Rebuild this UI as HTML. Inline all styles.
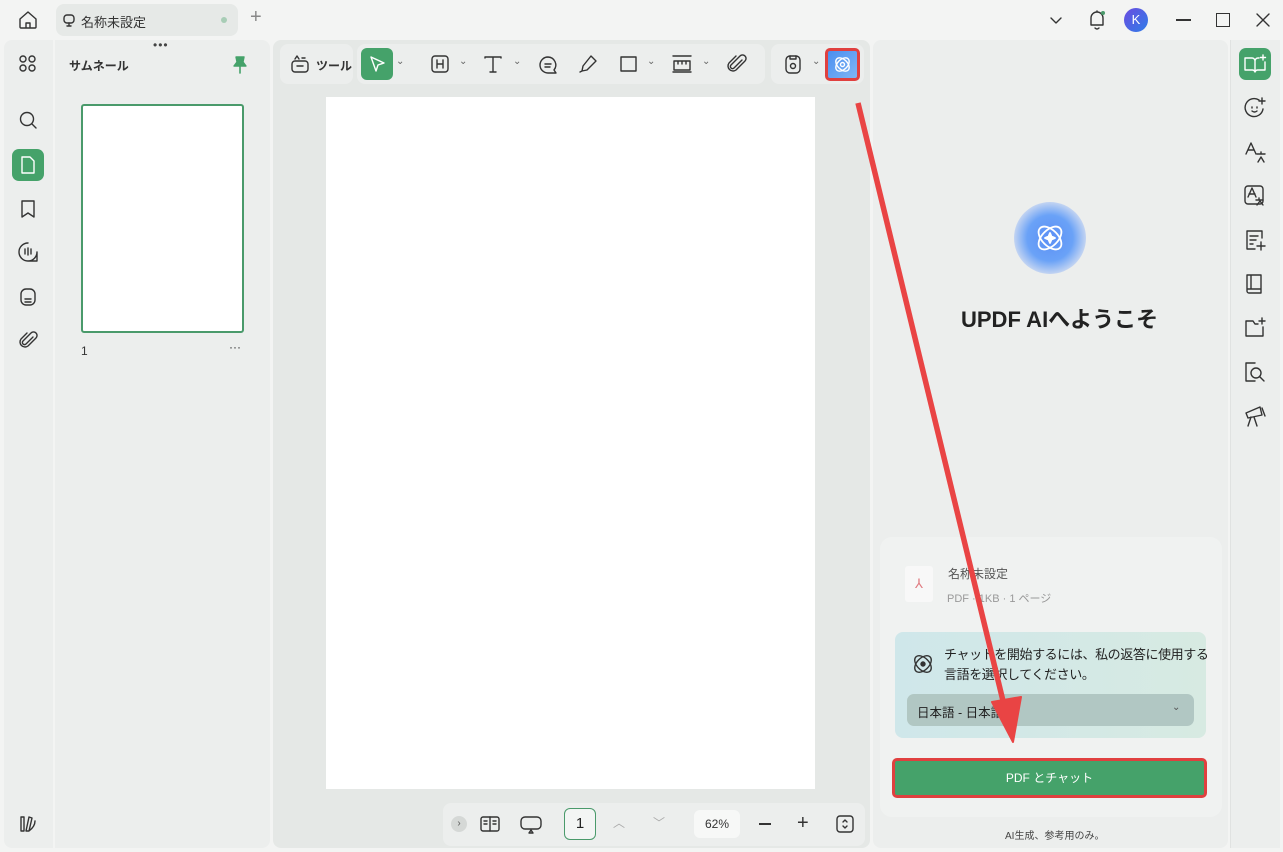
<!DOCTYPE html><html><head><meta charset="utf-8"><style>
*{margin:0;padding:0;box-sizing:border-box}
body{width:1283px;height:852px;background:#f3f4f3;font-family:"Liberation Sans","Noto Sans CJK JP",sans-serif;position:relative;overflow:hidden;color:#222}
.a{position:absolute}
svg{position:absolute;fill:none;stroke:#333;stroke-width:1.4;stroke-linecap:round;stroke-linejoin:round}
.grp{position:absolute;background:#eceeed;border-radius:8px;top:44px;height:40px}
</style></head><body>
<svg style="left:17px;top:9px" width="22" height="22" viewBox="0 0 22 22"><path d="M3 10L11 3l8 7v8a1 1 0 01-1 1H4a1 1 0 01-1-1z M9 19v-5h4v5"/></svg>
<div class="a" style="left:56px;top:4px;width:182px;height:32px;background:#e6e9e7;border-radius:8px"></div>
<svg style="left:62px;top:13px" width="14" height="14" viewBox="0 0 14 14"><rect x="2" y="2" width="10" height="8" rx="3"/><path d="M7 10v3M5 13h4"/></svg>
<div class="a" style="left:81px;top:12px;font-size:13px;color:#333">名称未設定</div>
<div class="a" style="left:221px;top:17px;width:6px;height:6px;border-radius:50%;background:#a8cdb6"></div>
<div class="a" style="left:250px;top:6px;font-size:20px;color:#888;font-weight:300">+</div>
<svg style="left:1049px;top:13px" width="14" height="14" viewBox="0 0 14 14"><path d="M2 5l5 5 5-5"/></svg>
<svg style="left:1086px;top:8px" width="22" height="24" viewBox="0 0 22 24"><path d="M5 17V10a6 6 0 0112 0v7H5z M9 20q2 2 4 0 M11 4V3"/><circle cx="17" cy="5" r="2" fill="#4a9a6b" stroke="none"/></svg>
<div class="a" style="left:1124px;top:8px;width:24px;height:24px;border-radius:50%;background:linear-gradient(135deg,#6a4ce0,#2f7de8);color:#fff;font-size:13px;text-align:center;line-height:24px">K</div>
<div class="a" style="left:1176px;top:19px;width:15px;height:1.5px;background:#333"></div>
<div class="a" style="left:1216px;top:13px;width:14px;height:14px;border:1.5px solid #333"></div>
<svg style="left:1255px;top:12px" width="16" height="16" viewBox="0 0 16 16"><path d="M2 2l12 12M14 2L2 14"/></svg>

<div class="a" style="left:4px;top:40px;width:49px;height:808px;background:#eceeed;border-radius:8px 0 0 8px"></div>
<svg style="left:18px;top:54px" width="20" height="20" viewBox="0 0 20 20"><circle cx="5" cy="5" r="3"/><circle cx="14" cy="5" r="3"/><circle cx="5" cy="14" r="3"/><circle cx="14" cy="14" r="3"/></svg>
<svg style="left:18px;top:110px" width="20" height="20" viewBox="0 0 20 20"><circle cx="9" cy="9" r="6.5"/><path d="M14 14l4 4"/></svg>
<div class="a" style="left:12px;top:149px;width:32px;height:32px;border-radius:7px;background:#45a26a"></div>
<svg style="left:19px;top:155px;stroke:#fff" width="18" height="20" viewBox="0 0 18 20"><path d="M3 2h8l4 4v12H3z"/></svg>
<svg style="left:19px;top:199px" width="18" height="20" viewBox="0 0 18 20"><path d="M3 2h12v16l-6-4-6 4z"/></svg>
<svg style="left:17px;top:241px" width="22" height="22" viewBox="0 0 22 22"><path d="M11 2a9 9 0 109 9 M8 8v5M11 7v7M14 8v5 M20 11v9h-7"/></svg>
<svg style="left:18px;top:286px" width="20" height="22" viewBox="0 0 20 22"><rect x="3" y="3" width="14" height="16" rx="5"/><path d="M7 13h6M7 16h6"/></svg>
<svg style="left:18px;top:330px" width="20" height="22" viewBox="0 0 20 22"><path d="M15 7l-7 7a2 2 0 01-3-3l8-8a3.5 3.5 0 015 5l-8 8a5 5 0 01-7-7l6-6"/></svg>
<svg style="left:18px;top:814px" width="20" height="20" viewBox="0 0 20 20"><path d="M3 17V3h3v14z M8 17l3-14 3 1-3 13z M11 17c4-3 6-6 6-10"/></svg>

<div class="a" style="left:55px;top:40px;width:215px;height:808px;background:#eceeed;border-radius:0 8px 8px 0"></div>
<div class="a" style="left:153px;top:38px;font-size:12px;color:#444;letter-spacing:1px">•••</div>
<div class="a" style="left:69px;top:57px;font-size:12px;font-weight:bold;color:#333">サムネール</div>
<svg style="left:231px;top:55px;fill:#45a26a;stroke:#45a26a" width="18" height="20" viewBox="0 0 18 20"><path d="M5 2h8l-1 5 3 4H3l3-4z"/><path d="M9 11v7" stroke-width="1.6"/></svg>
<div class="a" style="left:81px;top:104px;width:163px;height:229px;background:#fff;border:2px solid #4a9a6b;border-radius:3px"></div>
<div class="a" style="left:81px;top:344px;font-size:12px;color:#333">1</div>
<div class="a" style="left:229px;top:340px;font-size:12px;color:#333">···</div>

<div class="a" style="left:273px;top:40px;width:597px;height:808px;background:#e5e8e6;border-radius:8px"></div>
<div class="grp" style="left:280px;width:73px"></div>
<svg style="left:289px;top:53px" width="22" height="22" viewBox="0 0 22 22"><rect x="3" y="8" width="16" height="11" rx="3"/><path d="M8 13h6 M6 6l2-3 2 3 M13 5h3"/></svg>
<div class="a" style="left:316px;top:57px;font-size:12px;font-weight:bold;color:#333">ツール</div>
<div class="grp" style="left:357px;width:408px"></div>
<div class="a" style="left:361px;top:48px;width:32px;height:32px;background:#45a26a;border-radius:6px"></div>
<svg style="left:367px;top:54px;stroke:#fff" width="20" height="20" viewBox="0 0 20 20"><path d="M4 3l13 6-6 2-2 6z"/></svg>
<div class="a" style="left:396px;top:56px;font-size:10px;color:#666">⌄</div>
<svg style="left:430px;top:54px" width="20" height="20" viewBox="0 0 20 20"><rect x="2" y="2" width="16" height="16" rx="3"/><path d="M7 6v8M13 6v8M7 10h6"/></svg>
<div class="a" style="left:459px;top:56px;font-size:10px;color:#666">⌄</div>
<svg style="left:483px;top:54px" width="20" height="20" viewBox="0 0 20 20"><path d="M2 4V3h16v1 M10 3v15 M7 18h6"/></svg>
<div class="a" style="left:513px;top:56px;font-size:10px;color:#666">⌄</div>
<svg style="left:537px;top:54px" width="22" height="22" viewBox="0 0 22 22"><path d="M11 3a8 8 0 100 16h8l-2-3a8 8 0 00-6-13z M8 10h6M8 13h5"/></svg>
<svg style="left:578px;top:54px" width="20" height="20" viewBox="0 0 20 20"><path d="M13 2l5 5-9 9-5 1 1-5z M4 17l-2 1"/></svg>
<svg style="left:619px;top:54px" width="20" height="20" viewBox="0 0 20 20"><rect x="2" y="3" width="15" height="14"/></svg>
<div class="a" style="left:647px;top:56px;font-size:10px;color:#666">⌄</div>
<svg style="left:671px;top:54px" width="22" height="20" viewBox="0 0 22 20"><path d="M2 2h18M2 18h18 M3 7h16v9H3z M7 7v3M11 7v3M15 7v3"/></svg>
<div class="a" style="left:702px;top:56px;font-size:10px;color:#666">⌄</div>
<svg style="left:726px;top:53px" width="22" height="22" viewBox="0 0 22 22"><path d="M16 7l-8 8a2 2 0 01-3-3l9-9a3.5 3.5 0 015 5l-9 9a5 5 0 01-7-7l7-7"/></svg>
<div class="grp" style="left:771px;width:93px"></div>
<svg style="left:782px;top:53px" width="22" height="22" viewBox="0 0 22 22"><rect x="4" y="3" width="14" height="17" rx="4"/><circle cx="11" cy="13" r="2.5"/><path d="M8 3v3h6V3"/></svg>
<div class="a" style="left:812px;top:56px;font-size:10px;color:#666">⌄</div>
<div class="a" style="left:825px;top:48px;width:35px;height:33px;border:3px solid #e0403f;border-radius:5px;background:linear-gradient(135deg,#4a8ef0,#7fb6f5)"></div>
<svg style="left:831px;top:53px;stroke:#fff" width="23" height="23" viewBox="0 0 23 23"><ellipse cx="11.5" cy="11.5" rx="8" ry="5" transform="rotate(45 11.5 11.5)"/><ellipse cx="11.5" cy="11.5" rx="8" ry="5" transform="rotate(-45 11.5 11.5)"/><circle cx="11.5" cy="11.5" r="2"/></svg>
<div class="a" style="left:326px;top:97px;width:489px;height:692px;background:#fff"></div>
<div class="a" style="left:443px;top:803px;width:422px;height:43px;background:#eceeed;border-radius:8px"></div>
<div class="a" style="left:451px;top:816px;width:16px;height:16px;border-radius:50%;background:#d5d8d6;font-size:10px;text-align:center;line-height:16px;color:#555">›</div>
<svg style="left:480px;top:815px" width="20" height="18" viewBox="0 0 20 18"><rect x="1" y="2" width="18" height="14" rx="2"/><path d="M10 2v14M4 6h3M4 9h3M13 6h3M13 9h3"/></svg>
<svg style="left:520px;top:815px" width="22" height="20" viewBox="0 0 22 20"><rect x="1" y="2" width="20" height="12" rx="4"/><path d="M9 18l2-3 2 3z"/></svg>
<div class="a" style="left:564px;top:808px;width:32px;height:32px;border:1.5px solid #4a9a6b;border-radius:6px;background:#f3f5f4;font-size:15px;text-align:center;line-height:30px">1</div>
<div class="a" style="left:613px;top:814px;font-size:12px;color:#aaa">︿</div>
<div class="a" style="left:653px;top:814px;font-size:12px;color:#aaa">﹀</div>
<div class="a" style="left:694px;top:810px;width:46px;height:28px;background:#f7f8f7;border-radius:6px;font-size:12px;text-align:center;line-height:28px;color:#333">62%</div>
<div class="a" style="left:759px;top:823px;width:12px;height:1.5px;background:#333"></div>
<div class="a" style="left:797px;top:812px;font-size:20px;color:#333;font-weight:300">+</div>
<svg style="left:836px;top:815px" width="18" height="18" viewBox="0 0 18 18"><rect x="1" y="1" width="16" height="16" rx="3"/><path d="M7 7l2-2 2 2M7 11l2 2 2-2"/></svg>

<div class="a" style="left:873px;top:40px;width:355px;height:808px;background:#eceeed;border-radius:8px"></div>
<div class="a" style="left:1014px;top:202px;width:72px;height:72px;border-radius:50%;background:radial-gradient(circle,#5c8ff5 0,#6aa2f7 45%,rgba(150,180,250,.3) 75%,rgba(236,238,237,0) 100%)"></div>
<svg style="left:1030px;top:218px;stroke:#fff;stroke-width:1.8" width="40" height="40" viewBox="0 0 40 40"><ellipse cx="20" cy="20" rx="14" ry="8" transform="rotate(45 20 20)"/><ellipse cx="20" cy="20" rx="14" ry="8" transform="rotate(-45 20 20)"/><path d="M20 15l1.5 3.5L25 20l-3.5 1.5L20 25l-1.5-3.5L15 20l3.5-1.5z" fill="#fff"/></svg>
<div class="a" style="left:961px;top:302px;font-size:22px;font-weight:bold;color:#222">UPDF AIへようこそ</div>
<div class="a" style="left:880px;top:537px;width:342px;height:280px;background:#f0f2f1;border-radius:12px"></div>
<div class="a" style="left:905px;top:566px;width:28px;height:36px;background:#f8f8f8;border-radius:3px;color:#e07a80;font-size:13px;text-align:center;line-height:36px">⅄</div>
<div class="a" style="left:948px;top:565px;font-size:12px;color:#555">名称未設定</div>
<div class="a" style="left:947px;top:590px;font-size:11px;color:#999">PDF · 1KB · 1 ページ</div>
<div class="a" style="left:895px;top:632px;width:311px;height:106px;border-radius:8px;background:linear-gradient(90deg,#cfe7ea,#d7eae2)"></div>
<svg style="left:909px;top:650px" width="28" height="28" viewBox="0 0 28 28"><ellipse cx="14" cy="14" rx="10" ry="6" transform="rotate(45 14 14)"/><ellipse cx="14" cy="14" rx="10" ry="6" transform="rotate(-45 14 14)"/><circle cx="14" cy="14" r="2" fill="#333"/></svg>
<div class="a" style="left:944px;top:645px;font-size:13px;line-height:20px;color:#222;letter-spacing:-0.4px;white-space:nowrap">チャットを開始するには、私の返答に使用する<br>言語を選択してください。</div>
<div class="a" style="left:907px;top:694px;width:287px;height:32px;border-radius:7px;background:#b1c7c3"></div>
<div class="a" style="left:917px;top:702px;font-size:12.5px;color:#222">日本語 - 日本語</div>
<div class="a" style="left:1172px;top:702px;font-size:10px;color:#555">⌄</div>
<div class="a" style="left:892px;top:758px;width:315px;height:40px;border:3px solid #e0403f;border-radius:5px;background:#45a26a;color:#fff;font-size:12px;text-align:center;line-height:34px">PDF とチャット</div>
<div class="a" style="left:1005px;top:827px;font-size:10px;color:#444">AI生成、参考用のみ。</div>

<div class="a" style="left:1230px;top:40px;width:50px;height:808px;background:#eceeed;border-left:1px solid #e0e2e1"></div>
<div class="a" style="left:1239px;top:48px;width:32px;height:32px;border-radius:7px;background:#45a26a"></div>
<svg style="left:1243px;top:53px;stroke:#fff" width="24" height="22" viewBox="0 0 24 22"><path d="M2 5h7a3 3 0 013 3v11a3 3 0 00-3-2H2z M22 9v8h-7a3 3 0 00-3 2 M12 8a3 3 0 013-3h1 M20 2v5M17.5 4.5h5"/></svg>
<svg style="left:1243px;top:96px" width="24" height="24" viewBox="0 0 24 24"><path d="M16 4a9 9 0 10 4 9 M9 11v1M14 11v1M9 15q2.5 2 5 0 M19 2v6M16 5h6"/></svg>
<svg style="left:1243px;top:140px" width="24" height="24" viewBox="0 0 24 24"><path d="M3 14L8 3l5 11M5 10h6 M14 14h8M18 12v2 M15 22l3-5 3 5"/></svg>
<svg style="left:1243px;top:184px" width="24" height="24" viewBox="0 0 24 24"><rect x="2" y="2" width="18" height="18" rx="3"/><path d="M5 13l4-9 4 9M6 10h6 M13 16h7M16 14v2M14 21l3-4 3 4"/></svg>
<svg style="left:1243px;top:228px" width="24" height="24" viewBox="0 0 24 24"><path d="M19 10V3H4v18h8 M7 8h8M7 12h6M7 16h3 M18 14v8M14 18h8"/></svg>
<svg style="left:1243px;top:272px" width="24" height="24" viewBox="0 0 24 24"><path d="M4 3h14v18H6a2 2 0 01-2-2z M4 17h14 M8 3v14"/></svg>
<svg style="left:1243px;top:316px" width="24" height="24" viewBox="0 0 24 24"><path d="M20 11v9H3V5h7l2 3h3 M19 2v6M16 5h6"/></svg>
<svg style="left:1243px;top:360px" width="24" height="24" viewBox="0 0 24 24"><path d="M12 3H3v18h9"/><circle cx="13" cy="13" r="5"/><path d="M17 17l4 4"/></svg>
<svg style="left:1243px;top:404px" width="24" height="24" viewBox="0 0 24 24"><path d="M3 9l14-6 2 8-14 3z M8 13l-3 9M11 13l3 9 M19 4l3 8"/></svg>

<svg style="left:0;top:0;stroke:#e94444;stroke-width:5.5;stroke-linecap:butt" width="1283" height="852" viewBox="0 0 1283 852"><path d="M858 103L1004 705"/><path d="M992 702L1013 742 1021 697z" fill="#e94444" stroke-width="2"/></svg>
</body></html>
